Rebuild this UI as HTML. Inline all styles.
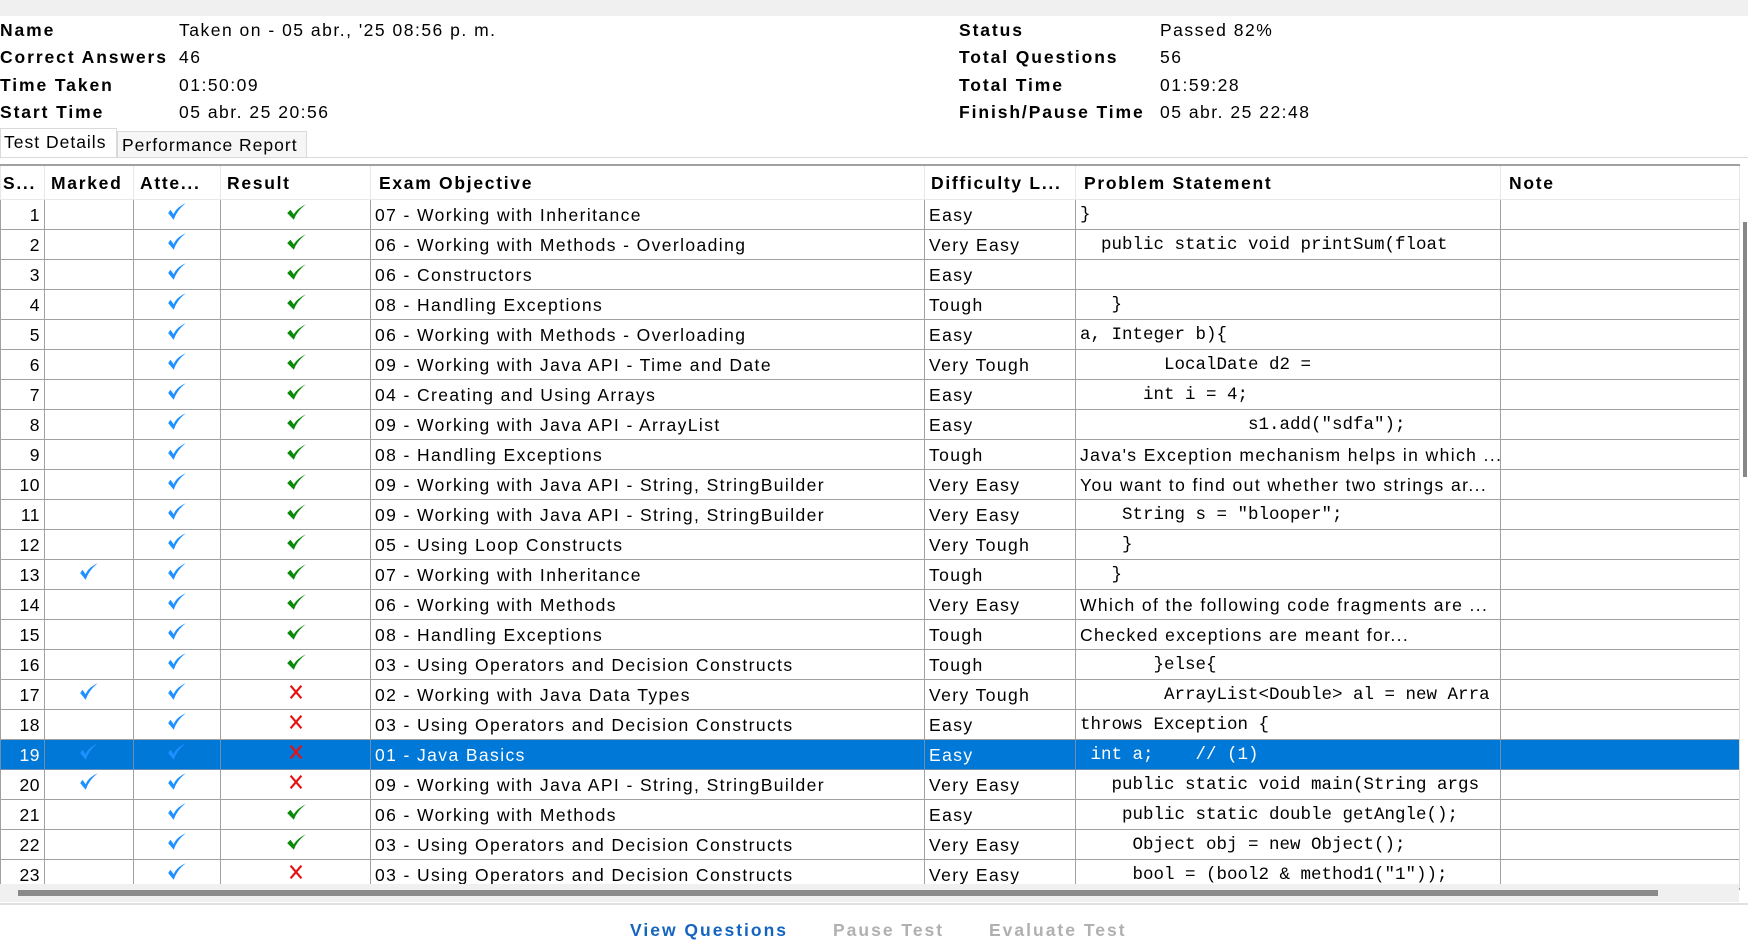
<!DOCTYPE html>
<html><head><meta charset="utf-8"><style>
*{margin:0;padding:0;box-sizing:border-box}
body{width:1748px;height:938px;overflow:hidden;background:#fff;font-family:"Liberation Sans",Verdana,sans-serif;color:#000;position:relative}
.tb{position:absolute;left:0;top:0;width:1748px;height:16px;background:#f0f0f0}
.lab{position:absolute;font-weight:bold;font-size:17.5px;letter-spacing:1.9px}
.val{position:absolute;font-size:17.5px;letter-spacing:1.5px}
.tab{position:absolute;font-size:17.5px;letter-spacing:1px;border:1px solid #d9d9d9;border-bottom:none;background:#f6f6f6;padding:3px 4px;white-space:nowrap}
table{position:absolute;left:0;top:164px;width:1739px;border-collapse:collapse;table-layout:fixed;font-size:17.5px;letter-spacing:1.4px}
td,th{height:30px;border:1px solid #a0a0a0;white-space:nowrap;overflow:hidden;padding:2px 3px 0 4px;vertical-align:middle;text-align:left}
th{height:34px;border:1px solid #e8e8e8;border-top:2px solid #a0a0a0;font-weight:bold;letter-spacing:1.7px;padding-left:6px}
td.n{text-align:right;padding-right:4px;letter-spacing:0.5px}
td.c{text-align:center;padding:0}
td.m{font-family:"Liberation Mono",monospace;font-size:17.5px;letter-spacing:0;position:relative}
tr.sel td{background:#0078d7;color:#fff;border-color:#6a8fb0}
.vs{position:absolute;left:1739px;top:198px;width:9px;height:690px;background:#fff;border-left:1px solid #ddd}
.vt{position:absolute;left:1743px;top:222px;width:4px;height:255px;background:#888}
.hs{position:absolute;left:0;top:884px;width:1739px;height:18px;background:#f0f0f0}
.ht{position:absolute;left:18px;top:890px;width:1640px;height:6px;background:#8a8a8a}
.sep{position:absolute;left:0;top:903px;width:1748px;height:2px;background:#e0e0e0}
.btn{position:absolute;top:920px;font-weight:bold;font-size:17.5px;letter-spacing:2px}
</style></head><body>
<div class="tb"></div>
<div class="lab" style="left:0;top:20px">Name</div><div class="val" style="left:179px;top:20px">Taken on - 05 abr., '25 08:56 p. m.</div>
<div class="lab" style="left:0;top:47px">Correct Answers</div><div class="val" style="left:179px;top:47px">46</div>
<div class="lab" style="left:0;top:75px">Time Taken</div><div class="val" style="left:179px;top:75px">01:50:09</div>
<div class="lab" style="left:0;top:102px">Start Time</div><div class="val" style="left:179px;top:102px">05 abr. 25 20:56</div>
<div class="lab" style="left:959px;top:20px">Status</div><div class="val" style="left:1160px;top:20px">Passed 82%</div>
<div class="lab" style="left:959px;top:47px">Total Questions</div><div class="val" style="left:1160px;top:47px">56</div>
<div class="lab" style="left:959px;top:75px">Total Time</div><div class="val" style="left:1160px;top:75px">01:59:28</div>
<div class="lab" style="left:959px;top:102px">Finish/Pause Time</div><div class="val" style="left:1160px;top:102px">05 abr. 25 22:48</div>
<div class="tab" style="left:0;top:128px;width:117px;height:30px;background:#fff;padding-left:3px">Test Details</div>
<div class="tab" style="left:117px;top:131px;width:190px;height:27px">Performance Report</div>
<div style="position:absolute;left:0;top:157px;width:1748px;height:1px;background:#d9d9d9"></div>
<svg width="0" height="0" style="position:absolute"><defs>
<symbol id="b" viewBox="0 0 20 20"><path d="M2 11 L7 17 Q10 8 18 2 Q9 6 7 12 L4 8Z" fill="#1e90ff"/></symbol>
<symbol id="g" viewBox="0 0 20 20"><path d="M2 11 L8 17 Q11 9 19 3 Q11 7 8 12 L5 8Z" fill="#0a8a0a"/></symbol>
<symbol id="x" viewBox="0 0 20 20"><path d="M4 3 L16 17 M16 3 L4 17" stroke="#e81010" stroke-width="2.4"/></symbol>
</defs></svg>
<table>
<colgroup><col style="width:44px"><col style="width:89px"><col style="width:87px"><col style="width:150px"><col style="width:554px"><col style="width:151px"><col style="width:425px"><col style="width:239px"></colgroup>
<tr><th style="padding-left:2px">S...</th><th>Marked</th><th>Atte...</th><th>Result</th><th style="padding-left:8px">Exam Objective</th><th>Difficulty L...</th><th style="padding-left:8px">Problem Statement</th><th style="padding-left:8px">Note</th></tr>
<tr><td class="n">1</td><td></td><td class="c"><svg width="22" height="22"><use href="#b"/></svg></td><td class="c"><svg width="22" height="22"><use href="#g"/></svg></td><td>07 - Working with Inheritance</td><td>Easy</td><td class="m">}</td><td></td></tr>
<tr><td class="n">2</td><td></td><td class="c"><svg width="22" height="22"><use href="#b"/></svg></td><td class="c"><svg width="22" height="22"><use href="#g"/></svg></td><td>06 - Working with Methods - Overloading</td><td>Very Easy</td><td class="m">&nbsp;&nbsp;public static void printSum(float</td><td></td></tr>
<tr><td class="n">3</td><td></td><td class="c"><svg width="22" height="22"><use href="#b"/></svg></td><td class="c"><svg width="22" height="22"><use href="#g"/></svg></td><td>06 - Constructors</td><td>Easy</td><td class="m"></td><td></td></tr>
<tr><td class="n">4</td><td></td><td class="c"><svg width="22" height="22"><use href="#b"/></svg></td><td class="c"><svg width="22" height="22"><use href="#g"/></svg></td><td>08 - Handling Exceptions</td><td>Tough</td><td class="m">&nbsp;&nbsp;&nbsp;}</td><td></td></tr>
<tr><td class="n">5</td><td></td><td class="c"><svg width="22" height="22"><use href="#b"/></svg></td><td class="c"><svg width="22" height="22"><use href="#g"/></svg></td><td>06 - Working with Methods - Overloading</td><td>Easy</td><td class="m">a, Integer b){</td><td></td></tr>
<tr><td class="n">6</td><td></td><td class="c"><svg width="22" height="22"><use href="#b"/></svg></td><td class="c"><svg width="22" height="22"><use href="#g"/></svg></td><td>09 - Working with Java API - Time and Date</td><td>Very Tough</td><td class="m">&nbsp;&nbsp;&nbsp;&nbsp;&nbsp;&nbsp;&nbsp;&nbsp;LocalDate d2 =</td><td></td></tr>
<tr><td class="n">7</td><td></td><td class="c"><svg width="22" height="22"><use href="#b"/></svg></td><td class="c"><svg width="22" height="22"><use href="#g"/></svg></td><td>04 - Creating and Using Arrays</td><td>Easy</td><td class="m">&nbsp;&nbsp;&nbsp;&nbsp;&nbsp;&nbsp;int i = 4;</td><td></td></tr>
<tr><td class="n">8</td><td></td><td class="c"><svg width="22" height="22"><use href="#b"/></svg></td><td class="c"><svg width="22" height="22"><use href="#g"/></svg></td><td>09 - Working with Java API - ArrayList</td><td>Easy</td><td class="m">&nbsp;&nbsp;&nbsp;&nbsp;&nbsp;&nbsp;&nbsp;&nbsp;&nbsp;&nbsp;&nbsp;&nbsp;&nbsp;&nbsp;&nbsp;&nbsp;s1.add("sdfa");</td><td></td></tr>
<tr><td class="n">9</td><td></td><td class="c"><svg width="22" height="22"><use href="#b"/></svg></td><td class="c"><svg width="22" height="22"><use href="#g"/></svg></td><td>08 - Handling Exceptions</td><td>Tough</td><td>Java's Exception mechanism helps in which ...</td><td></td></tr>
<tr><td class="n">10</td><td></td><td class="c"><svg width="22" height="22"><use href="#b"/></svg></td><td class="c"><svg width="22" height="22"><use href="#g"/></svg></td><td>09 - Working with Java API - String, StringBuilder</td><td>Very Easy</td><td>You want to find out whether two strings ar...</td><td></td></tr>
<tr><td class="n">11</td><td></td><td class="c"><svg width="22" height="22"><use href="#b"/></svg></td><td class="c"><svg width="22" height="22"><use href="#g"/></svg></td><td>09 - Working with Java API - String, StringBuilder</td><td>Very Easy</td><td class="m">&nbsp;&nbsp;&nbsp;&nbsp;String s = "blooper";</td><td></td></tr>
<tr><td class="n">12</td><td></td><td class="c"><svg width="22" height="22"><use href="#b"/></svg></td><td class="c"><svg width="22" height="22"><use href="#g"/></svg></td><td>05 - Using Loop Constructs</td><td>Very Tough</td><td class="m">&nbsp;&nbsp;&nbsp;&nbsp;}</td><td></td></tr>
<tr><td class="n">13</td><td class="c"><svg width="22" height="22"><use href="#b"/></svg></td><td class="c"><svg width="22" height="22"><use href="#b"/></svg></td><td class="c"><svg width="22" height="22"><use href="#g"/></svg></td><td>07 - Working with Inheritance</td><td>Tough</td><td class="m">&nbsp;&nbsp;&nbsp;}</td><td></td></tr>
<tr><td class="n">14</td><td></td><td class="c"><svg width="22" height="22"><use href="#b"/></svg></td><td class="c"><svg width="22" height="22"><use href="#g"/></svg></td><td>06 - Working with Methods</td><td>Very Easy</td><td>Which of the following code fragments are ...</td><td></td></tr>
<tr><td class="n">15</td><td></td><td class="c"><svg width="22" height="22"><use href="#b"/></svg></td><td class="c"><svg width="22" height="22"><use href="#g"/></svg></td><td>08 - Handling Exceptions</td><td>Tough</td><td>Checked exceptions are meant for...</td><td></td></tr>
<tr><td class="n">16</td><td></td><td class="c"><svg width="22" height="22"><use href="#b"/></svg></td><td class="c"><svg width="22" height="22"><use href="#g"/></svg></td><td>03 - Using Operators and Decision Constructs</td><td>Tough</td><td class="m">&nbsp;&nbsp;&nbsp;&nbsp;&nbsp;&nbsp;&nbsp;}else{</td><td></td></tr>
<tr><td class="n">17</td><td class="c"><svg width="22" height="22"><use href="#b"/></svg></td><td class="c"><svg width="22" height="22"><use href="#b"/></svg></td><td class="c"><svg width="18" height="18"><use href="#x"/></svg></td><td>02 - Working with Java Data Types</td><td>Very Tough</td><td class="m">&nbsp;&nbsp;&nbsp;&nbsp;&nbsp;&nbsp;&nbsp;&nbsp;ArrayList&lt;Double&gt; al = new Arra</td><td></td></tr>
<tr><td class="n">18</td><td></td><td class="c"><svg width="22" height="22"><use href="#b"/></svg></td><td class="c"><svg width="18" height="18"><use href="#x"/></svg></td><td>03 - Using Operators and Decision Constructs</td><td>Easy</td><td class="m">throws Exception {</td><td></td></tr>
<tr class="sel"><td class="n">19</td><td class="c"><svg width="22" height="22"><use href="#b"/></svg></td><td class="c"><svg width="22" height="22"><use href="#b"/></svg></td><td class="c"><svg width="18" height="18"><use href="#x"/></svg></td><td>01 - Java Basics</td><td>Easy</td><td class="m">&nbsp;int a;&nbsp;&nbsp;&nbsp;&nbsp;// (1)</td><td></td></tr>
<tr><td class="n">20</td><td class="c"><svg width="22" height="22"><use href="#b"/></svg></td><td class="c"><svg width="22" height="22"><use href="#b"/></svg></td><td class="c"><svg width="18" height="18"><use href="#x"/></svg></td><td>09 - Working with Java API - String, StringBuilder</td><td>Very Easy</td><td class="m">&nbsp;&nbsp;&nbsp;public static void main(String args</td><td></td></tr>
<tr><td class="n">21</td><td></td><td class="c"><svg width="22" height="22"><use href="#b"/></svg></td><td class="c"><svg width="22" height="22"><use href="#g"/></svg></td><td>06 - Working with Methods</td><td>Easy</td><td class="m">&nbsp;&nbsp;&nbsp;&nbsp;public static double getAngle();</td><td></td></tr>
<tr><td class="n">22</td><td></td><td class="c"><svg width="22" height="22"><use href="#b"/></svg></td><td class="c"><svg width="22" height="22"><use href="#g"/></svg></td><td>03 - Using Operators and Decision Constructs</td><td>Very Easy</td><td class="m">&nbsp;&nbsp;&nbsp;&nbsp;&nbsp;Object obj = new Object();</td><td></td></tr>
<tr><td class="n">23</td><td></td><td class="c"><svg width="22" height="22"><use href="#b"/></svg></td><td class="c"><svg width="18" height="18"><use href="#x"/></svg></td><td>03 - Using Operators and Decision Constructs</td><td>Very Easy</td><td class="m">&nbsp;&nbsp;&nbsp;&nbsp;&nbsp;bool = (bool2 &amp; method1("1"));</td><td></td></tr>
</table>
<div class="vs"></div><div class="vt"></div>
<div class="hs"></div><div class="ht"></div>
<div class="sep"></div>
<div class="btn" style="left:630px;color:#1565c0">View Questions</div>
<div class="btn" style="left:833px;color:#b0b0b0">Pause Test</div>
<div class="btn" style="left:989px;color:#b0b0b0">Evaluate Test</div>
</body></html>
